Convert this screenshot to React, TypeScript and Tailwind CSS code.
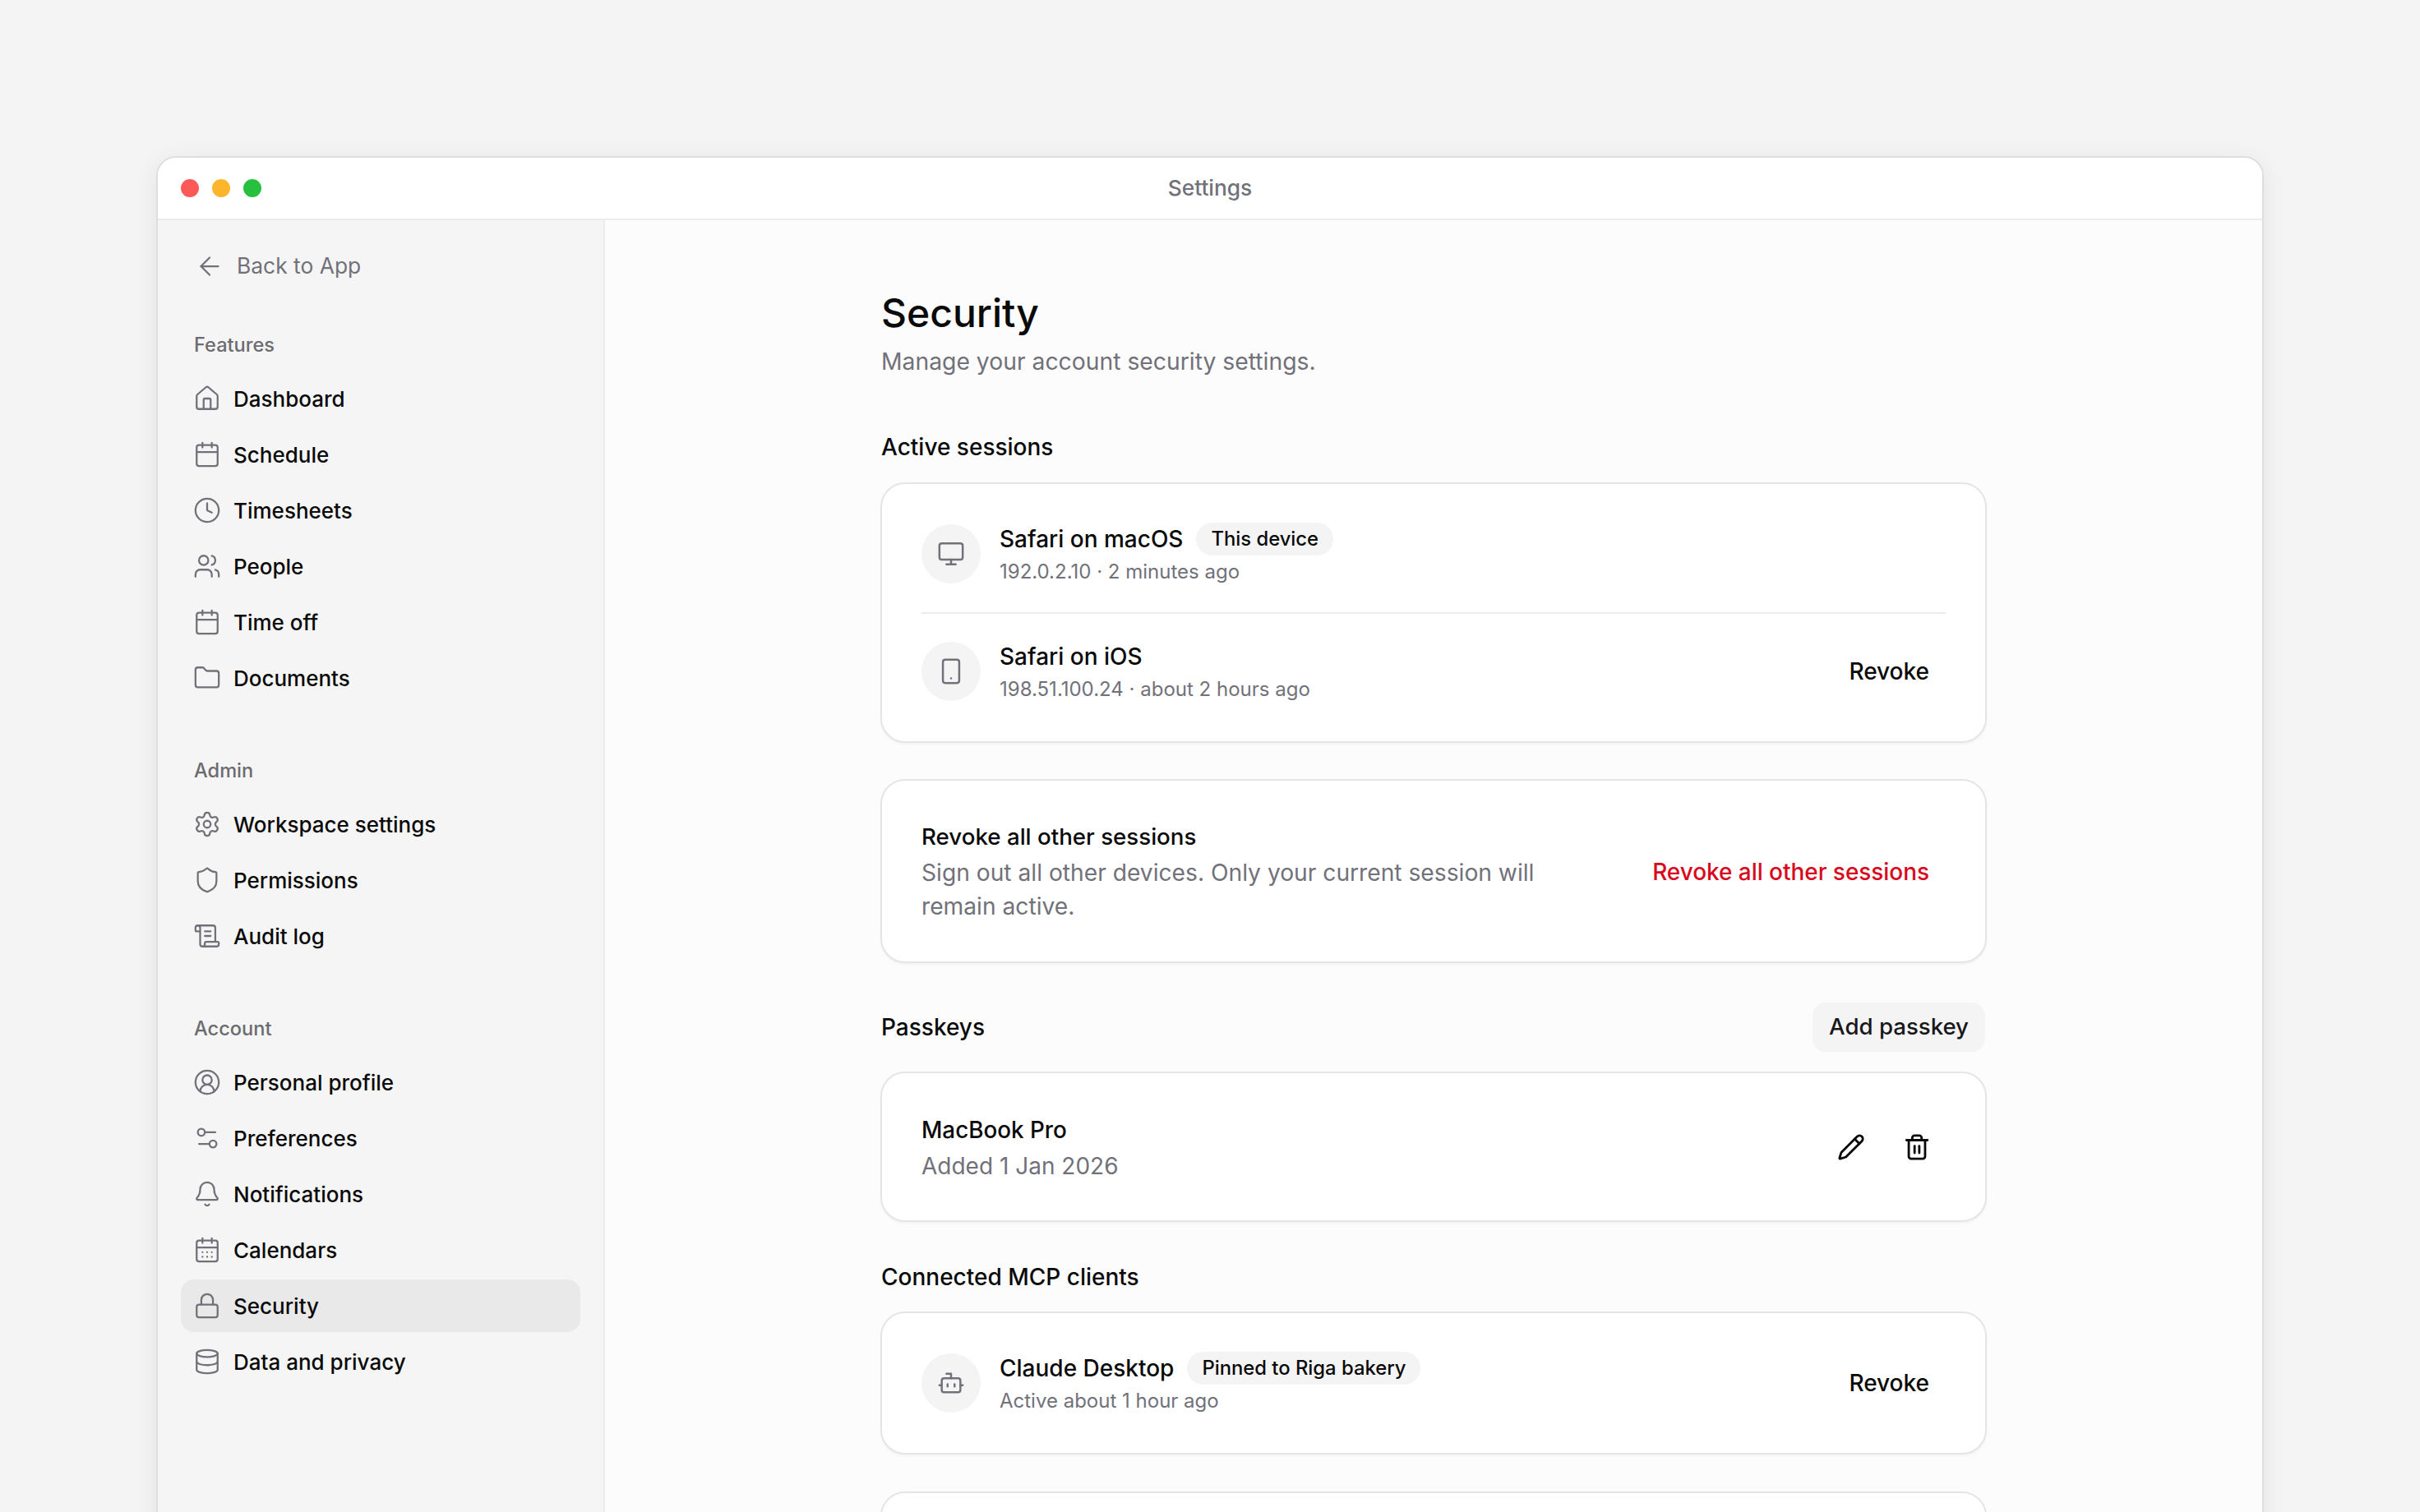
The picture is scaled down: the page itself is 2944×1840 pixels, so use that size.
import {
  ArrowLeft,
  Bell,
  Bot,
  Calendar,
  CalendarDays,
  CircleUserRound,
  Clock,
  Database,
  Folder,
  House,
  Lock,
  Monitor,
  Pencil,
  ScrollText,
  Settings,
  Settings2,
  Shield,
  Smartphone,
  Trash2,
  Users,
} from "lucide-react";
import type { ReactNode } from "react";

const navGroups = [
  {
    label: "Features",
    items: [
      { name: "Dashboard", icon: House },
      { name: "Schedule", icon: Calendar },
      { name: "Timesheets", icon: Clock },
      { name: "People", icon: Users },
      { name: "Time off", icon: Calendar },
      { name: "Documents", icon: Folder },
    ],
  },
  {
    label: "Admin",
    items: [
      { name: "Workspace settings", icon: Settings },
      { name: "Permissions", icon: Shield },
      { name: "Audit log", icon: ScrollText },
    ],
  },
  {
    label: "Account",
    items: [
      { name: "Personal profile", icon: CircleUserRound },
      { name: "Preferences", icon: Settings2 },
      { name: "Notifications", icon: Bell },
      { name: "Calendars", icon: CalendarDays },
      { name: "Security", icon: Lock, active: true },
      { name: "Data and privacy", icon: Database },
    ],
  },
];

function Sidebar() {
  return (
    <aside className="w-[544px] shrink-0 bg-[#f5f5f5] border-r-2 border-[#ececee] px-[28px] pt-[24px]">
      <div className="h-[64px] flex items-center gap-[15px] px-[17px] text-[26.4px] text-[#71717a]">
        <ArrowLeft size={36} strokeWidth={1.5} className="text-[#71717a]" />
        <span>Back to App</span>
      </div>
      {navGroups.map((group, i) => (
        <div key={group.label} className={i === 0 ? "mt-[46px]" : "mt-[63px]"}>
          <div className="h-[36px] mb-[15px] px-[16px] flex items-center text-[23.6px] font-medium text-[#6b6b70]">
            {group.label}
          </div>
          <div className="flex flex-col gap-[4px]">
            {group.items.map((item) => {
              const Icon = item.icon;
              return (
                <div
                  key={item.name}
                  className={`h-[64px] flex items-center gap-[15px] px-[15px] rounded-[16px] text-[26px] font-medium text-[#0a0a0a] ${
                    item.active ? "bg-[#e9e9ea]" : ""
                  }`}
                >
                  <Icon size={34} strokeWidth={1.6} className="shrink-0 text-[#71717a]" />
                  <span>{item.name}</span>
                </div>
              );
            })}
          </div>
        </div>
      ))}
    </aside>
  );
}

function Card({ children, className = "" }: { children: ReactNode; className?: string }) {
  return (
    <div className={`bg-white border-2 border-[#e5e5e6] rounded-[30px] shadow-[0_2px_3px_rgba(0,0,0,0.04)] px-[48px] ${className}`}>
      {children}
    </div>
  );
}

function IconCircle({ children }: { children: ReactNode }) {
  return (
    <div className="w-[72px] h-[72px] rounded-full bg-[#f4f4f5] flex items-center justify-center shrink-0 text-[#71717a]">
      {children}
    </div>
  );
}

function Badge({ children }: { children: ReactNode }) {
  return (
    <span className="h-[40px] px-[18px] rounded-full bg-[#f4f4f5] flex items-center text-[23.8px] font-medium text-[#0a0a0a]">
      {children}
    </span>
  );
}

function Row({
  icon,
  title,
  badge,
  meta,
  action,
}: {
  icon: ReactNode;
  title: string;
  badge?: string;
  meta: string;
  action?: boolean;
}) {
  return (
    <div className="flex items-start">
      <IconCircle>{icon}</IconCircle>
      <div className="ml-[23px] flex-1">
        <div className="flex items-center gap-[16px] h-[36px]">
          <span className="text-[28px] font-medium text-[#0a0a0a]">{title}</span>
          {badge && <Badge>{badge}</Badge>}
        </div>
        <div className="mt-[6px] -mb-[2px] text-[24px] leading-[32px] text-[#71717a]">{meta}</div>
      </div>
      {action && <span className="self-center mr-[20px] text-[28px] font-medium text-[#0a0a0a]">Revoke</span>}
    </div>
  );
}

function Heading({ children }: { children: ReactNode }) {
  return <h2 className="pl-[1px] text-[28px] leading-[34px] font-medium text-[#0a0a0a]">{children}</h2>;
}

function Main() {
  return (
    <main className="flex-1 bg-[#fcfcfc] pt-[83px]">
      <div className="w-[1346px] mx-auto">
        <h1 className="pl-[1px] text-[48px] leading-[60px] font-medium text-[#0a0a0a]">Security</h1>
        <p className="pl-[1px] mt-[9px] text-[28.3px] leading-[40px] text-[#71717a]">Manage your account security settings.</p>

        <div className="mt-[67px]">
          <Heading>Active sessions</Heading>
        </div>
        <Card className="mt-[26px] pt-[49px] pb-[49px]">
          <div className="pb-[35px] border-b-2 border-[#ececee]">
            <Row icon={<Monitor size={34} strokeWidth={1.75} />} title="Safari on macOS" badge="This device" meta="192.0.2.10 · 2 minutes ago" />
          </div>
          <div className="pt-[34px]">
            <Row icon={<Smartphone size={34} strokeWidth={1.75} />} title="Safari on iOS" meta="198.51.100.24 · about 2 hours ago" action />
          </div>
        </Card>

        <Card className="mt-[44px] pt-[49px] pb-[46px] flex items-center justify-between">
          <div className="w-[790px]">
            <div className="text-[27.7px] leading-[38px] font-medium text-[#0a0a0a]">Revoke all other sessions</div>
            <p className="mt-[5px] text-[28.2px] leading-[41px] text-[#71717a]">
              Sign out all other devices. Only your current session will remain active.
            </p>
          </div>
          <span className="mr-[20px] text-[27.9px] font-medium text-[#d8071c]">Revoke all other sessions</span>
        </Card>

        <div className="mt-[48px] flex items-center justify-between pr-[2px]">
          <Heading>Passkeys</Heading>
          <button className="h-[60px] px-[20px] rounded-[16px] bg-[#f4f4f5] text-[27.6px] font-medium text-[#18181b]">
            Add passkey
          </button>
        </div>
        <Card className="mt-[24px] pt-[47px] pb-[44px] flex items-center justify-between">
          <div>
            <div className="text-[27.8px] leading-[44px] font-medium text-[#0a0a0a]">MacBook Pro</div>
            <div className="text-[28px] leading-[44px] text-[#71717a]">Added 1 Jan 2026</div>
          </div>
          <div className="flex items-center gap-[46px] mr-[18px] mb-[3px] text-[#0a0a0a]">
            <Pencil size={34} strokeWidth={2} />
            <Trash2 size={34} strokeWidth={2} />
          </div>
        </Card>

        <div className="mt-[50px]">
          <Heading>Connected MCP clients</Heading>
        </div>
        <Card className="mt-[25px] py-[49px]">
          <Row icon={<Bot size={34} strokeWidth={1.75} />} title="Claude Desktop" badge="Pinned to Riga bakery" meta="Active about 1 hour ago" action />
        </Card>
        <Card className="mt-[45px] h-[200px]">
          <span />
        </Card>
      </div>
    </main>
  );
}

export default function App() {
  return (
    <div className="h-[1840px] overflow-hidden bg-[#f4f4f4] pt-[190px] px-[190px] font-['Inter',sans-serif]">
      <div className="w-[2564px] h-[1700px] flex flex-col bg-white rounded-t-[24px] border-2 border-[#dedee0] shadow-[0_6px_30px_rgba(0,0,0,0.07)] overflow-hidden">
        <header className="h-[76px] shrink-0 bg-white border-b-2 border-[#ececee] flex items-center px-[28px]">
          <div className="flex gap-[16px] w-[320px]">
            <span className="w-[22px] h-[22px] rounded-full bg-[#fb5a57]" />
            <span className="w-[22px] h-[22px] rounded-full bg-[#fdb52c]" />
            <span className="w-[22px] h-[22px] rounded-full bg-[#28c13f]" />
          </div>
          <div className="flex-1 text-center pr-[320px] text-[26.3px] font-medium text-[#71717a]">Settings</div>
        </header>
        <div className="flex-1 flex min-h-0">
          <Sidebar />
          <Main />
        </div>
      </div>
    </div>
  );
}
